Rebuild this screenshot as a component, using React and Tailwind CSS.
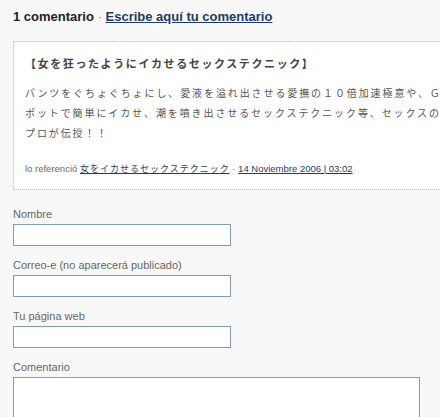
import React from "react";

const jp = '"DejaVu Sans", "Noto Sans CJK JP", sans-serif';
const arial = '"Liberation Sans", Arial, sans-serif';

const Field = ({ label, wide, first }) => (
  <div className={first ? "" : "mt-[11px]"}>
    <label className="block h-[16px] text-[11px] leading-[16px] text-[#666]">{label}</label>
    <div
      className={`mt-[2px] border border-[#7f9db9] bg-white ${wide ? "w-[407px] h-[60px]" : "w-[218px] h-[22px]"}`}
    />
  </div>
);

export default function App() {
  return (
    <div
      className="w-[440px] h-[417px] overflow-hidden bg-[#f8f8f8] pl-[13px]"
      style={{ fontFamily: arial }}
    >
      <div className="h-[41px] pt-[9px] text-[13px] leading-[16px] font-bold text-[#222] whitespace-nowrap">
        1 comentario <span className="font-normal text-[#888]">·</span>{" "}
        <a href="#" className="text-[#1b3c6b] underline">Escribe aquí tu comentario</a>
      </div>

      <div className="w-[500px] bg-white border-l border-t border-b border-dotted border-[#bbb] pl-[11px] pt-[14px] pb-[13px]">
        <p
          className="text-[11px] leading-[18px] font-bold text-[#444] tracking-[1.6px] whitespace-nowrap"
          style={{ fontFamily: jp }}
        >
          【女を狂ったようにイカせるセックステクニック】
        </p>
        <p
          className="mt-[10px] text-[10px] leading-[20px] text-[#555] tracking-[1.9px] whitespace-nowrap"
          style={{ fontFamily: jp }}
        >
          パンツをぐちょぐちょにし、愛液を溢れ出させる愛撫の１０倍加速極意や、Ｇス
          <br />
          ポットで簡単にイカせ、潮を噴き出させるセックステクニック等、セックスの
          <br />
          プロが伝授！！
        </p>
        <div className="mt-[18px] text-[9.5px] leading-[14px] text-[#666] whitespace-nowrap">
          lo referenció{" "}
          <a href="#" className="text-[9px] text-[#1b3c6b] underline tracking-[1px]" style={{ fontFamily: jp }}>
            女をイカせるセックステクニック
          </a>{" "}
          · <a href="#" className="text-[#1b3c6b] underline">14 Noviembre 2006 | 03:02</a>
        </div>
      </div>

      <div className="pt-[16px]">
        <Field label="Nombre" first />
        <Field label="Correo-e (no aparecerá publicado)" />
        <Field label="Tu página web" />
        <Field label="Comentario" wide />
      </div>
    </div>
  );
}
